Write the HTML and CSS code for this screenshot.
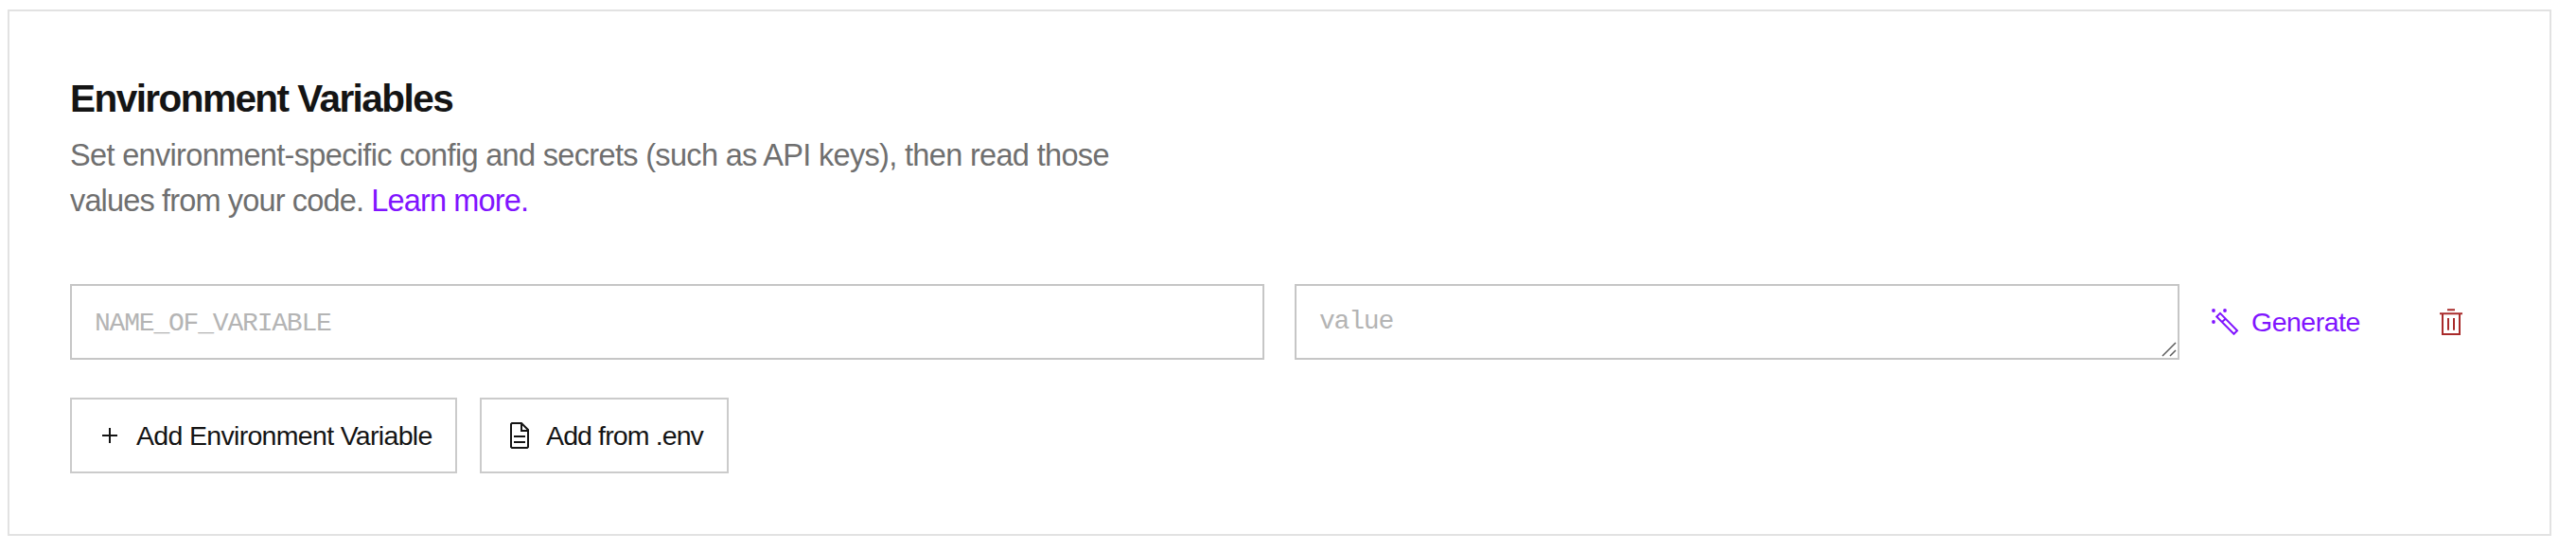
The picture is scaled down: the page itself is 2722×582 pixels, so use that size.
FILE: index.html
```html
<!DOCTYPE html>
<html lang="en">
<head>
<meta charset="utf-8">
<title>Environment Variables</title>
<link rel="stylesheet" href="styles.css">
</head>
<body>
<section class="card">
  <h2 class="title">Environment Variables</h2>
  <p class="description"><span class="line">Set environment-specific config and secrets (such as API keys), then read those</span> <span class="line line-short">values from your code. <a class="link">Learn more.</a></span></p>
  <div class="row">
    <input class="field name" placeholder="NAME_OF_VARIABLE">
    <div class="value-wrap">
      <textarea class="field value" placeholder="value"></textarea>
      <svg class="grip" width="16" height="16" viewBox="0 0 16 16"><path d="M1 15 15 1M9 15l6-6"/></svg>
    </div>
    <button class="generate">
      <svg class="wand" width="30" height="28" viewBox="0 0 30 28"><path d="M5.300 8.500 9 4.800 27 23.300 23.500 26.800ZM11 14l4-3.500"/><g class="dots"><circle cx="2" cy="2" r="1.9"/><circle cx="14" cy="2" r="1.9"/><circle cx="2" cy="14" r="1.9"/></g></svg>
      <span>Generate</span>
    </button>
    <button class="delete" aria-label="Delete">
      <svg width="24" height="28" viewBox="0 0 24 28"><path d="M8 1.300h8M0 5.300h24M3 5.300V27h18V5.300M9 10v12.700M15 10v12.700"/></svg>
    </button>
  </div>
  <div class="actions">
    <button class="button add">
      <svg class="plus" width="16" height="16" viewBox="0 0 16 16"><path d="M8 0v16M0 8h16"/></svg>
      <span>Add Environment Variable</span>
    </button>
    <button class="button from-env">
      <svg class="file" width="20" height="28" viewBox="0 0 20 28"><path d="M2 1H12l7 7v18l-1 1H2l-1-1V2ZM12 1v8H19M4 15h12M4 21h12"/></svg>
      <span>Add from .env</span>
    </button>
  </div>
</section>
</body>
</html>
```
FILE: styles.css
```css
* { box-sizing: border-box; }
body {
  margin: 0;
  padding: 10px 26px 16px 8px;
  background: #fff;
  color: #141414;
  font-family: "Liberation Sans", Arial, sans-serif;
}
.card {
  height: 556px;
  padding: 68px 64px 0;
  border: 2px solid #e2e2e2;
  background: #fff;
}
.title {
  margin: 0;
  font-size: 40.500px;
  line-height: 48px;
  letter-spacing: -1.550px;
  white-space: nowrap;
}
.description {
  margin: 12px 0 0;
  color: #6f6f6f;
  font-size: 32.500px;
  line-height: 48px;
}
.line {
  display: block;
  letter-spacing: -0.670px;
  white-space: nowrap;
}
.line-short { letter-spacing: -0.850px; }
.link { color: #8014ff; }
.row {
  display: flex;
  align-items: center;
  margin-top: 64px;
}
.field {
  display: block;
  height: 80px;
  margin: 0;
  border: 2px solid #c6c6c6;
  border-radius: 0;
  background: #fff;
  font-family: "Liberation Mono", monospace;
  font-size: 28px;
  letter-spacing: -1.200px;
  outline: 0;
}
.field::placeholder { color: #b4b4b4; opacity: 1; }
.name { width: 1262px; padding: 2px 24px 0; }
.value-wrap { position: relative; margin-left: 32px; }
.value {
  width: 935px;
  padding: 22px 24px;
  line-height: 32px;
  resize: none;
  overflow: hidden;
}
.grip {
  position: absolute;
  right: 3px;
  bottom: 3px;
  fill: none;
  stroke: #5c5c5c;
  stroke-width: 1.500;
}
button {
  display: flex;
  align-items: center;
  margin: 0;
  padding: 0;
  border: 0;
  background: none;
  color: inherit;
  font: 28.500px/40px "Liberation Sans", Arial, sans-serif;
  white-space: nowrap;
}
svg { flex: none; display: block; fill: none; stroke: currentColor; stroke-width: 2; }
.generate { width: 160px; margin-left: 34px; gap: 12px; color: #8014ff; letter-spacing: -0.500px; }
.wand .dots { fill: currentColor; stroke: none; }
.delete { margin-left: 81px; color: #a92b2b; }
.actions { display: flex; gap: 24px; margin-top: 40px; }
.button { height: 80px; border: 2px solid #cbcbcb; background: #fff; letter-spacing: -0.680px; }
.add { width: 409px; padding-left: 32px; }
.add span { margin-left: 20px; }
.from-env { width: 263px; padding-left: 30px; letter-spacing: -0.880px; }
.from-env span { margin-left: 18px; }
```
